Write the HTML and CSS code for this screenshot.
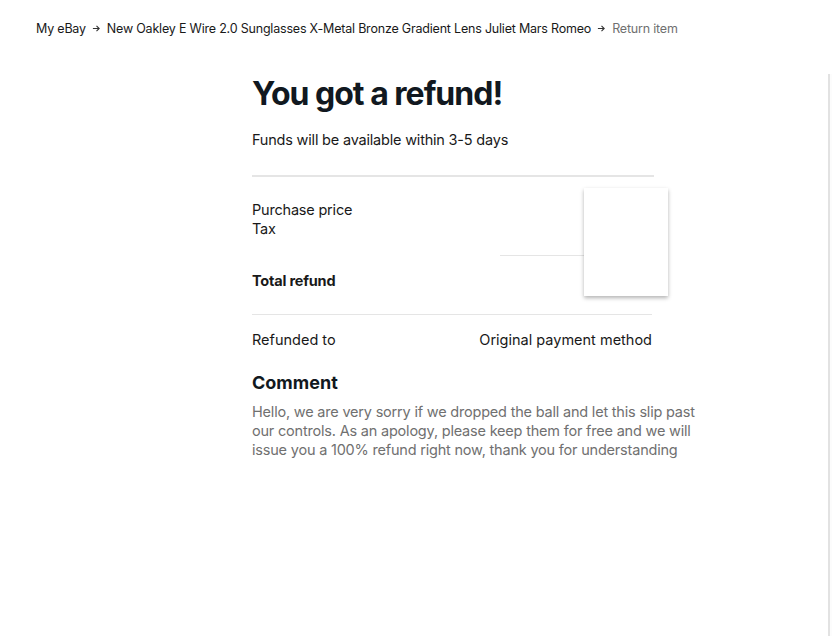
FILE: index.html
```html
<!DOCTYPE html>
<html lang="en">
<head>
    <meta charset="UTF-8">
    <title>Return item</title>
    <link rel="stylesheet" href="styles.css">
</head>
<body>
    <nav class="breadcrumb">
        <a href="#">My eBay</a>
        <svg class="crumb-arrow" viewBox="0 0 10 10"><path d="M1 5h7M5 2l3 3-3 3" /></svg>
        <a href="#">New Oakley E Wire 2.0 Sunglasses X-Metal Bronze Gradient Lens Juliet Mars Romeo</a>
        <svg class="crumb-arrow" viewBox="0 0 10 10"><path d="M1 5h7M5 2l3 3-3 3" /></svg>
        <span class="current">Return item</span>
    </nav>

    <div class="layout">
        <main class="refund">
            <h1>You got a refund!</h1>
            <p class="subtitle">Funds will be available within 3-5 days</p>

            <section class="summary">
                <div class="lines">
                    <div class="line">Purchase price</div>
                    <div class="line">Tax</div>
                </div>
                <div class="total-rule"></div>
                <div class="line total">Total refund</div>
                <div class="popover"></div>
            </section>

            <div class="refunded">
                <span>Refunded to</span>
                <span>Original payment method</span>
            </div>

            <h2>Comment</h2>
            <p class="comment">Hello, we are very sorry if we dropped the ball and let this slip past our controls. As an apology, please keep them for free and we will issue you a 100% refund right now, thank you for understanding</p>
        </main>
        <aside class="side-panel"></aside>
    </div>
</body>
</html>
```

FILE: styles.css
```css
body {
    margin: 0;
    font-family: 'Inter', 'Liberation Sans', sans-serif;
    color: #191919;
    background: #ffffff;
    height: 636px;
    display: flex;
    flex-direction: column;
    overflow: hidden;
}

.breadcrumb {
    display: flex;
    align-items: center;
    gap: 6px;
    padding: 19px 36px 0;
    height: 18px;
    font-size: 12.5px;
    letter-spacing: -0.2px;
}

.breadcrumb a {
    color: #191919;
    text-decoration: none;
}

.breadcrumb .current {
    color: #707070;
}

.crumb-arrow {
    width: 9px;
    height: 9px;
    fill: none;
    stroke: #333333;
    stroke-width: 1.2;
}

.layout {
    flex: 1;
    display: flex;
    margin-top: 37px;
}

.refund {
    flex: 1;
    padding-left: 252px;
}

.side-panel {
    width: 2px;
    border-left: 2px solid #e2e2e2;
    background: #fcfcfc;
}

h1 {
    margin: 0;
    width: 400px;
    font-size: 32px;
    font-weight: 700;
    line-height: 40px;
    letter-spacing: -1px;
    color: #111820;
}

.subtitle {
    margin: 16px 0 0;
    font-size: 14.5px;
    line-height: 20px;
    letter-spacing: -0.2px;
}

.summary {
    position: relative;
    width: 402px;
    margin-top: 25px;
    border-top: 2px solid #e5e5e5;
    padding-top: 23px;
}

.line {
    font-size: 14.5px;
    line-height: 19px;
    letter-spacing: -0.2px;
}

.total-rule {
    margin: 17px 0 0 248px;
    width: 84px;
    border-top: 1px solid #e5e5e5;
}

.total {
    margin-top: 15px;
    font-weight: 700;
    padding-bottom: 24px;
}

.popover {
    position: absolute;
    left: 332px;
    top: 11px;
    width: 84px;
    height: 108px;
    background: #ffffff;
    box-shadow: 0 2px 4px rgba(0, 0, 0, 0.3);
}

.refunded {
    width: 400px;
    display: flex;
    justify-content: space-between;
    border-top: 1px solid #e5e5e5;
    padding-top: 15px;
    font-size: 14.5px;
    line-height: 19px;
    letter-spacing: 0;
}

h2 {
    margin: 22px 0 0;
    font-size: 18px;
    line-height: 24px;
    font-weight: 700;
    color: #111820;
}

.comment {
    margin: 7px 0 0;
    width: 452px;
    font-size: 14.5px;
    line-height: 19px;
    letter-spacing: -0.2px;
    color: #707070;
}
```
